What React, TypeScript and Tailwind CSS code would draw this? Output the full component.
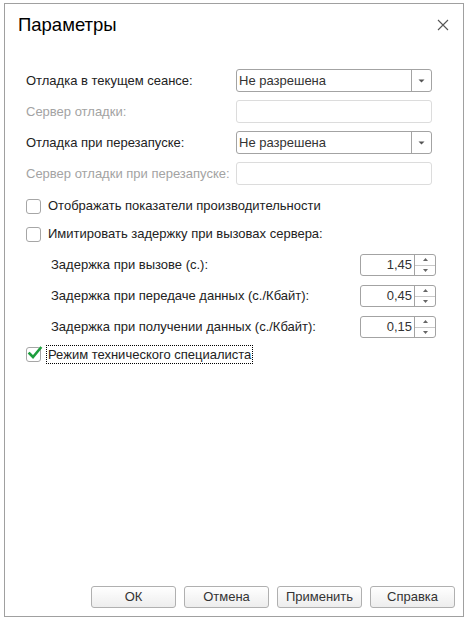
import React from "react";

const font = { fontFamily: '"Liberation Sans", Arial, sans-serif' };

function Select({ value }: { value: string }) {
  return (
    <div className="flex h-[23px] w-[196px] items-stretch rounded-[3px] border border-[#a3a3a3] bg-white">
      <div className="flex flex-1 items-center pl-[2px] text-[13px] text-[#333]">{value}</div>
      <div className="flex w-[20px] items-center justify-center border-l border-[#a3a3a3]">
        <svg width="7" height="4" viewBox="0 0 7 4">
          <path d="M0.5 0.5 H6.5 L3.5 3.5 Z" fill="#555" />
        </svg>
      </div>
    </div>
  );
}

function Input() {
  return <div className="h-[23px] w-[196px] rounded-[3px] border border-[#dcdcdc] bg-white" />;
}

function Checkbox({ checked }: { checked?: boolean }) {
  return (
    <div className="relative h-[15px] w-[15px] shrink-0 rounded-[3px] border border-[#a6a6a6] bg-white">
      {checked && (
        <svg className="absolute left-[0px] top-[-2px]" width="16" height="15" viewBox="0 0 16 15">
          <path d="M2.5 7.5 L6 11 L13.5 2" fill="none" stroke="#1e9e3e" strokeWidth="2.6" strokeLinecap="square" />
        </svg>
      )}
    </div>
  );
}

function Spinner({ value }: { value: string }) {
  return (
    <div className="flex h-[22px] w-[76px] items-stretch rounded-[3px] border border-[#a3a3a3] bg-white">
      <div className="flex flex-1 items-center justify-end pr-[2px] text-[13px] text-[#333]">{value}</div>
      <div className="flex w-[21px] flex-col border-l border-[#a3a3a3]">
        <div className="flex flex-1 items-center justify-center border-b border-[#c8c8c8]">
          <svg width="5" height="3" viewBox="0 0 5 3">
            <path d="M0 3 H5 L2.5 0 Z" fill="#666" />
          </svg>
        </div>
        <div className="flex flex-1 items-center justify-center">
          <svg width="5" height="3" viewBox="0 0 5 3">
            <path d="M0 0 H5 L2.5 3 Z" fill="#666" />
          </svg>
        </div>
      </div>
    </div>
  );
}

function Btn({ label }: { label: string }) {
  return (
    <div className="flex h-[22px] w-[85px] items-center justify-center rounded-[3px] border border-[#b0b0b0] bg-gradient-to-b from-white to-[#ededed] text-[13px] text-[#333]">
      {label}
    </div>
  );
}

export default function App() {
  return (
    <div className="h-[621px] w-[468px] bg-white pl-[4px] pt-[3px]" style={font}>
      <div className="flex h-[614px] w-[460px] flex-col border border-[#a0a0a0] bg-white">
        <div className="flex items-center justify-between pl-[13px] pr-[14px] pt-[9px]">
          <div className="text-[18.5px] leading-[24px] text-black">Параметры</div>
          <svg width="12" height="12" viewBox="0 0 12 12">
            <path d="M1 1 L11 11 M11 1 L1 11" stroke="#555" strokeWidth="1.1" />
          </svg>
        </div>

        <div className="flex flex-col pl-[21px] text-[13px] text-[#222]">
          <div className="mt-[32px] flex h-[23px] items-center">
            <div className="w-[210px]">Отладка в текущем сеансе:</div>
            <Select value="Не разрешена" />
          </div>
          <div className="mt-[8px] flex h-[23px] items-center">
            <div className="w-[210px] text-[#a3a3a3]">Сервер отладки:</div>
            <Input />
          </div>
          <div className="mt-[8px] flex h-[23px] items-center">
            <div className="w-[210px]">Отладка при перезапуске:</div>
            <Select value="Не разрешена" />
          </div>
          <div className="mt-[8px] flex h-[23px] items-center">
            <div className="w-[210px] text-[#a3a3a3]">Сервер отладки при перезапуске:</div>
            <Input />
          </div>

          <div className="mt-[10px] flex h-[22px] items-center gap-[7px]">
            <Checkbox />
            <div>Отображать показатели производительности</div>
          </div>
          <div className="mt-[6px] flex h-[22px] items-center gap-[7px]">
            <Checkbox />
            <div>Имитировать задержку при вызовах сервера:</div>
          </div>

          <div className="mt-[9px] flex h-[22px] items-center pl-[25px]">
            <div className="w-[309px]">Задержка при вызове (с.):</div>
            <Spinner value="1,45" />
          </div>
          <div className="mt-[9px] flex h-[22px] items-center pl-[25px]">
            <div className="w-[309px]">Задержка при передаче данных (с./Кбайт):</div>
            <Spinner value="0,45" />
          </div>
          <div className="mt-[9px] flex h-[22px] items-center pl-[25px]">
            <div className="w-[309px]">Задержка при получении данных (с./Кбайт):</div>
            <Spinner value="0,15" />
          </div>

          <div className="mt-[5px] flex h-[22px] items-center gap-[5px]">
            <Checkbox checked />
            <div className="border border-dotted border-black px-[1px] leading-[17px]">Режим технического специалиста</div>
          </div>
        </div>

        <div className="flex-1" />
        <div className="flex justify-end gap-[8px] pb-[8px] pr-[8px]">
          <Btn label="ОК" />
          <Btn label="Отмена" />
          <Btn label="Применить" />
          <Btn label="Справка" />
        </div>
      </div>
    </div>
  );
}
